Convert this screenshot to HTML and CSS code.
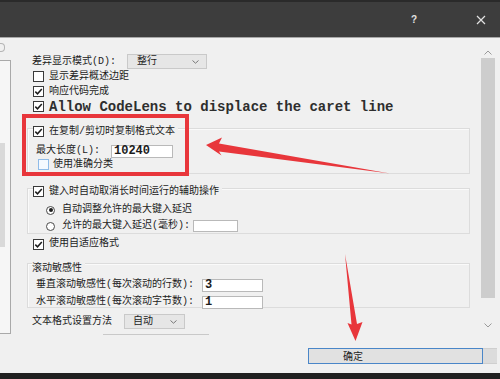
FILE: index.html
```html
<!DOCTYPE html>
<html lang="zh-CN">
<head>
<meta charset="utf-8">
<title>选项</title>
<link rel="stylesheet" href="styles.css">
</head>
<body>
<div class="window">
  <div class="titlebar">
    <span class="help">?</span>
    <svg class="close" width="10" height="10" viewBox="0 0 10 10"><path d="M1 1 L9 9 M9 1 L1 9" stroke="#e2e2e2" stroke-width="1.2" fill="none"/></svg>
  </div>

  <div class="main">
    <div class="sidebar">
      <div class="side-icon"></div>
      <div class="side-box"><div class="side-thumb"></div></div>
    </div>

    <div class="content">
      <div class="row row-a">
        <span class="label w-diff">差异显示模式(D):</span>
        <div class="select sel-diff"><span>整行</span><svg class="chev" width="7" height="4" viewBox="0 0 7 4"><path d="M0.5 0.5 L3.5 3.2 L6.5 0.5" stroke="#777" fill="none"/></svg></div>
      </div>
      <div class="row crow"><span class="cb"></span><span class="txt">显示差异概述边距</span></div>
      <div class="row crow"><span class="cb on"><svg width="9" height="9" viewBox="0 0 9 9"><path d="M1.3 4.6 L3.5 6.8 L7.8 2" stroke="#1c1c1c" stroke-width="1.5" fill="none"/></svg></span><span class="txt">响应代码完成</span></div>
      <div class="row crow"><span class="cb on"><svg width="9" height="9" viewBox="0 0 9 9"><path d="M1.3 4.6 L3.5 6.8 L7.8 2" stroke="#1c1c1c" stroke-width="1.5" fill="none"/></svg></span><span class="txt mono">Allow CodeLens to displace the caret line</span></div>

      <div class="group g1">
        <div class="ghead gh-check"><span class="cb on"><svg width="9" height="9" viewBox="0 0 9 9"><path d="M1.3 4.6 L3.5 6.8 L7.8 2" stroke="#1c1c1c" stroke-width="1.5" fill="none"/></svg></span><span class="txt">在复制/剪切时复制格式文本</span></div>
        <div class="grow maxlen"><span class="label w-maxlen">最大长度(L):</span><div class="input in-len"><span class="num">10240</span></div></div>
        <div class="grow accurate"><span class="cb hover"></span><span class="txt">使用准确分类</span></div>
      </div>

      <div class="group g2">
        <div class="ghead gh-check"><span class="cb on"><svg width="9" height="9" viewBox="0 0 9 9"><path d="M1.3 4.6 L3.5 6.8 L7.8 2" stroke="#1c1c1c" stroke-width="1.5" fill="none"/></svg></span><span class="txt">键入时自动取消长时间运行的辅助操作</span></div>
        <div class="grow rrow r1"><span class="radio on"></span><span class="txt rtxt">自动调整允许的最大键入延迟</span></div>
        <div class="grow rrow r2"><span class="radio"></span><span class="txt rtxt">允许的最大键入延迟(毫秒):</span><div class="input in-delay"></div></div>
      </div>

      <div class="row crow adaptive"><span class="cb on"><svg width="9" height="9" viewBox="0 0 9 9"><path d="M1.3 4.6 L3.5 6.8 L7.8 2" stroke="#1c1c1c" stroke-width="1.5" fill="none"/></svg></span><span class="txt">使用自适应格式</span></div>

      <div class="group g3">
        <div class="ghead gh-text"><span class="txt">滚动敏感性</span></div>
        <div class="grow srow s1"><span class="label w-scroll">垂直滚动敏感性(每次滚动的行数):</span><div class="input in-scroll"><span class="num">3</span></div></div>
        <div class="grow srow s2"><span class="label w-scroll">水平滚动敏感性(每次滚动字节数):</span><div class="input in-scroll"><span class="num">1</span></div></div>
      </div>

      <div class="row row-fmt">
        <span class="label w-fmt">文本格式设置方法</span>
        <div class="select sel-fmt"><span>自动</span><svg class="chev" width="7" height="4" viewBox="0 0 7 4"><path d="M0.5 0.5 L3.5 3.2 L6.5 0.5" stroke="#777" fill="none"/></svg></div>
      </div>
      <div class="cut-line"></div>
    </div>

    <div class="scrollbar">
      <svg class="sb-up" width="8" height="5" viewBox="0 0 8 5"><path d="M0.5 4.5 L4 1 L7.5 4.5" stroke="#9a9a9a" fill="none"/></svg>
      <div class="sb-thumb"></div>
      <svg class="sb-down" width="8" height="5" viewBox="0 0 8 5"><path d="M0.5 0.5 L4 4 L7.5 0.5" stroke="#9a9a9a" fill="none"/></svg>
    </div>
  </div>

  <div class="footer">
    <div class="btn">确定</div>
    <div class="btn2"></div>
  </div>
  <div class="bottombar"></div>

  <div class="redbox"></div>
  <svg class="arrows" width="500" height="379" viewBox="0 0 500 379">
    <polygon points="206,145 222,137.5 219,143.5 390,173.5 219,151.5 221.5,155.5" fill="#e8363b"/>
    <polygon points="345,254 357,324 362.5,322 355.5,341 347.5,323 351.5,324.5" fill="#e8363b"/>
  </svg>
</div>
</body>
</html>
```

FILE: styles.css
```css
* { box-sizing: border-box; }

html, body {
  margin: 0;
  padding: 0;
}

body {
  background: #f0f0f0;
  font-family: "Liberation Mono", "Noto Sans CJK SC", monospace;
  font-size: 10px;
  line-height: 1;
  color: #1c1c1c;
}

.window {
  position: relative;
  width: 500px;
  height: 379px;
  overflow: hidden;
  background: #f0f0f0;
}

/* title bar */
.titlebar {
  height: 38px;
  background: #3d3d3d;
  border-top: 2px solid #2a2a2a;
  border-bottom: 1px solid #a8a8a8;
  display: flex;
  align-items: center;
  padding-left: 411px;
}
.help {
  width: 6px;
  text-align: center;
  color: #e2e2e2;
  font-family: "Liberation Sans", sans-serif;
  font-weight: bold;
  font-size: 10px;
}
.close {
  flex: none;
  margin-left: 59px;
}

/* main area */
.main {
  display: flex;
  height: 302px;
}

.sidebar {
  width: 11px;
  flex: none;
}
.side-icon {
  margin-top: 5px;
  width: 5px;
  height: 9px;
  border: 1px solid #b5b5b5;
  border-left: none;
  border-radius: 0 4px 4px 0;
}
.side-box {
  margin-top: 8px;
  height: 274px;
  background: #f6f6f6;
  border-top: 1px solid #a9a9a9;
  border-right: 1px solid #a9a9a9;
  border-bottom: 1px solid #a9a9a9;
  padding-top: 82px;
}
.side-thumb {
  width: 5px;
  height: 104px;
  background: #d9d9d9;
}

.content {
  flex: 1;
  padding-left: 21px;
  padding-top: 16px;
}

.row {
  display: flex;
  align-items: center;
  height: 15px;
}
.grow {
  display: flex;
  align-items: center;
}

.label, .txt {
  white-space: nowrap;
}
.mono {
  font-family: "Liberation Mono", monospace;
  font-weight: bold;
  font-size: 14px;
  color: #2e2e2e;
}

.w-diff { width: 95px; }
.w-fmt { width: 92px; }
.w-maxlen { width: 75px; }
.w-scroll { width: 166px; }

/* checkboxes */
.cb {
  width: 11px;
  height: 11px;
  flex: none;
  border: 1px solid #3a3a3a;
  background: #fff;
  display: flex;
  align-items: center;
  justify-content: center;
}
.cb.hover {
  border-color: #8fbbe8;
  background: #f4f9ff;
}
.crow .cb { margin-left: 1px; }
.crow .txt { margin-left: 5px; }

/* radios */
.radio {
  width: 9px;
  height: 9px;
  flex: none;
  border: 1px solid #4a4a4a;
  border-radius: 50%;
  background: #fff;
  display: flex;
  align-items: center;
  justify-content: center;
}
.radio.on::after {
  content: "";
  width: 4px;
  height: 4px;
  border-radius: 50%;
  background: #1c1c1c;
}

/* selects */
.select {
  height: 15px;
  border: 1px solid #c9c9c9;
  background: #e6e6e6;
  display: flex;
  align-items: center;
  justify-content: space-between;
  padding: 0 7px 0 9px;
}
.sel-diff { width: 80px; }
.sel-fmt { width: 61px; padding-left: 8px; }

/* inputs */
.input {
  background: #fff;
  border: 1px solid #b9b9b9;
  display: flex;
  align-items: center;
  padding-left: 2px;
}
.num {
  font-family: "Liberation Mono", monospace;
  font-weight: bold;
  font-size: 12px;
}
.in-len { width: 62px; height: 13px; }
.in-delay { width: 45px; height: 12px; margin-left: 3px; }
.in-scroll { width: 61px; height: 13px; }

/* group boxes */
.group {
  margin-left: -5px;
  width: 443px;
  border: 1px solid #dcdcdc;
  box-shadow: inset 1px 1px 0 #fafafa;
}
.ghead {
  display: inline-flex;
  align-items: center;
  height: 14px;
  margin-top: -8px;
  background: #f0f0f0;
  padding-right: 3px;
}
.gh-check { margin-left: 5px; }
.gh-check .txt { margin-left: 5px; }
.gh-text { margin-left: 4px; }

.g1 {
  margin-top: 14px;
  height: 46px;
}
.maxlen {
  margin-top: 5px;
  height: 14px;
  padding-left: 8px;
}
.accurate {
  height: 13px;
  padding-left: 10px;
}
.accurate .txt { margin-left: 4px; }

.g2 {
  margin-top: 14px;
  height: 46px;
}
.rrow {
  height: 14px;
  padding-left: 18px;
}
.r1 { margin-top: 4px; }
.r2 { margin-top: 2px; }
.rtxt { margin-left: 7px; }

.adaptive {
  margin-top: 3px;
  height: 14px;
}

.g3 {
  margin-top: 12px;
  height: 45px;
}
.srow {
  height: 14px;
  padding-left: 8px;
}
.s1 { margin-top: 2px; }
.s2 { margin-top: 3px; }

.row-fmt {
  margin-top: 6px;
}

.cut-line {
  margin-top: 5px;
  margin-left: 71px;
  width: 106px;
  height: 1px;
  background: #c9c9c9;
}

/* scrollbar */
.scrollbar {
  width: 14px;
  margin-right: 5px;
  flex: none;
  display: flex;
  flex-direction: column;
  align-items: center;
  padding-top: 12px;
}
.sb-thumb {
  margin-top: 3px;
  width: 14px;
  height: 240px;
  background: #cdcdcd;
}
.sb-down {
  margin-top: 25px;
}

/* footer */
.footer {
  height: 33px;
  padding-top: 8px;
  padding-left: 308px;
  display: flex;
  align-items: flex-start;
}
.btn {
  width: 175px;
  height: 16px;
  border: 1px solid #4a86c8;
  background: #e1e1e1;
  padding-left: 34px;
  display: flex;
  align-items: center;
  font-family: "Noto Sans CJK SC", sans-serif;
  font-size: 10px;
  color: #1c1c1c;
}
.btn2 {
  width: 14px;
  height: 16px;
  background: #dcdcdc;
  border-top: 1px solid #cfcfcf;
  border-bottom: 1px solid #cfcfcf;
}

.bottombar {
  height: 6px;
  background: #202020;
}

/* annotations */
.redbox {
  position: absolute;
  left: 22px;
  top: 114px;
  width: 167px;
  height: 62px;
  border: 4px solid #e8363b;
}
.arrows {
  position: absolute;
  left: 0;
  top: 0;
  pointer-events: none;
}
```
